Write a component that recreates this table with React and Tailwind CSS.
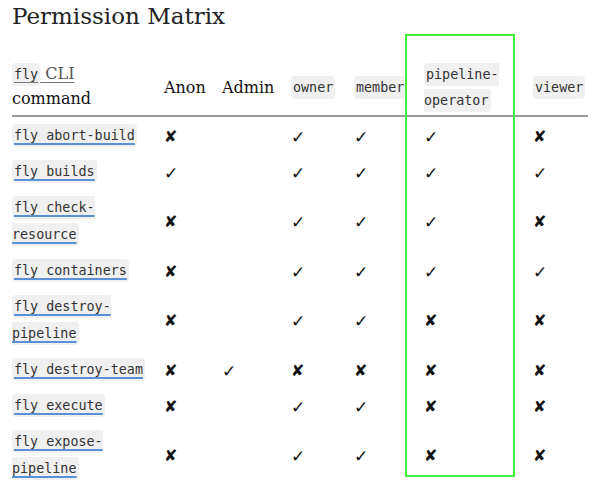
import React from "react";

const Y = "✓";
const N = "✘";

const rows = [
  { cmd: "fly abort-build", marks: [N, "", Y, Y, Y, N] },
  { cmd: "fly builds", marks: [Y, "", Y, Y, Y, Y] },
  { cmd: "fly check-resource", marks: [N, "", Y, Y, Y, N] },
  { cmd: "fly containers", marks: [N, "", Y, Y, Y, Y] },
  { cmd: "fly destroy-pipeline", marks: [N, "", Y, Y, N, N] },
  { cmd: "fly destroy-team", marks: [N, Y, N, N, N, N] },
  { cmd: "fly execute", marks: [N, "", Y, Y, N, N] },
  { cmd: "fly expose-pipeline", marks: [N, "", Y, Y, N, N] },
];

const widths = ["w-[152px]", "w-[58px]", "w-[69px]", "w-[63px]", "w-[70px]", "w-[109px]", "w-[55px]"];

const mono = "[font-family:'DejaVu_Sans_Mono',monospace] text-[13.4px]";

const Code = ({ children }) => (
  <code className={`${mono} rounded-[4px] bg-[#f0f0f0] px-[2px] py-[4px] leading-[16px] text-[#333]`}>
    {children}
  </code>
);

export default function App() {
  return (
    <div className="relative h-[489px] w-[600px] overflow-hidden bg-white px-3 text-[#111] [font-family:'DejaVu_Serif',serif]">
      <h1 className="pt-[1px] text-[23px] leading-[30px] text-[#222]">Permission Matrix</h1>

      <table className="mt-[29px] table-fixed border-collapse text-left">
        <thead>
          <tr className="border-b-2 border-[#999]">
            <th className={`${widths[0]} pb-[4px] pt-[1px] align-middle text-[16px] font-normal leading-[25px]`}>
              <a className="text-[#555] underline decoration-[#777] underline-offset-[3px]">
                <Code>fly</Code> CLI
              </a>
              <br />
              command
            </th>
            <th className={`${widths[1]} text-[16px] font-normal leading-[25px]`}>Anon</th>
            <th className={`${widths[2]} text-[16px] font-normal leading-[25px]`}>Admin</th>
            <th className={`${widths[3]} ${mono} font-normal leading-[26px]`}>
              <Code>owner</Code>
            </th>
            <th className={`${widths[4]} ${mono} font-normal leading-[26px]`}>
              <Code>member</Code>
            </th>
            <th className={`${widths[5]} ${mono} pr-[12px] font-normal leading-[26px]`}>
              <Code>pipeline-operator</Code>
            </th>
            <th className={`${widths[6]} ${mono} font-normal leading-[26px]`}>
              <Code>viewer</Code>
            </th>
          </tr>
        </thead>
        <tbody>
          {rows.map((row) => (
            <tr key={row.cmd}>
              <td className={`${widths[0]} ${mono} pr-[14px] pt-[5px] pb-[4px] leading-[27px]`}>
                <a className="underline decoration-[#5b8fd6] decoration-[1.5px] underline-offset-[3px]">
                  <Code>{row.cmd}</Code>
                </a>
              </td>
              {row.marks.map((m, i) => (
                <td
                  key={i}
                  className={`${widths[i + 1]} pt-[5px] pb-[4px] align-middle text-[16px] leading-[27px] [font-family:'DejaVu_Sans',sans-serif]`}
                >
                  <span
                    className={`inline-block align-middle leading-[16px] text-[#111] ${
                      m === N ? "font-bold" : "font-semibold text-[17px]"
                    }`}
                  >
                    {m}
                  </span>
                </td>
              ))}
            </tr>
          ))}
        </tbody>
      </table>

      <div className="absolute left-[405px] top-[34px] h-[443px] w-[110px] border-2 border-[#44ee3a]" />
    </div>
  );
}
